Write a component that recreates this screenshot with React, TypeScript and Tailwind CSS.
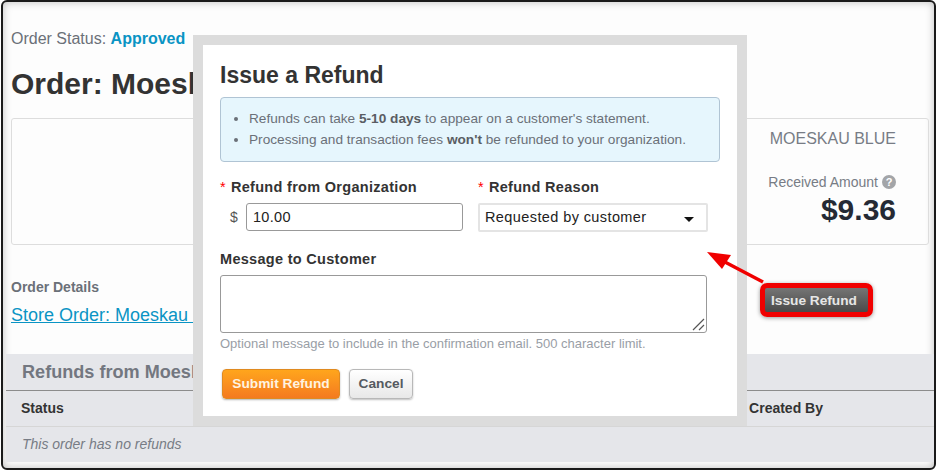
const font = { fontFamily: '"Liberation Sans", Arial, sans-serif' };

function Modal() {
  return (
    <div className="absolute left-[193px] top-[35px] w-[554px] h-[391px] border-[10px] border-[#dcdcdc] bg-white pl-[17px] pr-[17px]">
      <h2 className="mt-[17px] text-[23px] leading-[26px] font-bold text-[#333333]">Issue a Refund</h2>
      <div className="mt-[9px] h-[65px] rounded-[4px] border border-[#b0c4d4] bg-[#e6f6fd] pl-[28px] pt-[10px] text-[13.65px] leading-[21px] text-[#6b7078]">
        <ul className="list-disc pl-0">
          <li>Refunds can take <b className="text-[#5a5d63]">5-10 days</b> to appear on a customer's statement.</li>
          <li>Processing and transaction fees <b className="text-[#5a5d63]">won't</b> be refunded to your organization.</li>
        </ul>
      </div>
      <div className="mt-[15px] flex">
        <div className="w-[258px]">
          <div className="text-[14.5px] leading-[20px] font-bold tracking-[0.3px] text-[#333333]"><span className="text-[#f00] font-normal mr-[5px]">*</span>Refund from Organization</div>
          <div className="mt-[6px] flex items-center pl-[10px]">
            <span className="w-[16px] text-[14px] text-[#555]">$</span>
            <div className="h-[28px] w-[217px] rounded-[3px] border border-[#999] pl-[6px] text-[14.5px] leading-[26px] tracking-[0.3px] text-[#222]">10.00</div>
          </div>
        </div>
        <div className="w-[230px]">
          <div className="text-[14.5px] leading-[20px] font-bold tracking-[0.3px] text-[#333333]"><span className="text-[#f00] font-normal mr-[5px]">*</span>Refund Reason</div>
          <div className="mt-[6px] flex h-[29px] items-center justify-between rounded-[2px] border-2 border-[#e4e4e4] pl-[5px] pr-[12px] pt-[1px] text-[14.5px] tracking-[0.4px] text-[#222]">
            <span>Requested by customer</span>
            <svg width="10" height="5" viewBox="0 0 10 5" className="mt-[3px]"><path d="M0 0h10L5 5z" fill="#111" /></svg>
          </div>
        </div>
      </div>
      <div className="mt-[17px] text-[14.5px] leading-[20px] font-bold tracking-[0.3px] text-[#333333]">Message to Customer</div>
      <div className="relative mt-[6px] h-[58px] w-[487px] rounded-[3px] border border-[#999]">
        <svg width="13" height="13" viewBox="0 0 13 13" className="absolute bottom-[1px] right-[1px]"><path d="M1 12 12 1M7 12l5-5" stroke="#555" strokeWidth="1.2" /></svg>
      </div>
      <p className="mt-[3px] text-[13px] leading-[16px] text-[#999ea6]">Optional message to include in the confirmation email. 500 character limit.</p>
      <div className="mt-[17px] ml-[2px] flex gap-[9px]">
        <div className="flex h-[30px] w-[118px] items-center justify-center rounded-[4px] border border-[#e08a20] bg-gradient-to-b from-[#ffa51c] to-[#f47a20] pt-[1px] text-[13.7px] font-bold text-[#fff3e0] shadow-[0_1px_2px_rgba(0,0,0,0.3)]">Submit Refund</div>
        <div className="flex h-[30px] w-[64px] items-center justify-center rounded-[4px] border border-[#b8b8b8] bg-gradient-to-b from-[#ffffff] to-[#e8e8e8] pt-[1px] text-[13.7px] font-bold text-[#555a60] shadow-[0_1px_2px_rgba(0,0,0,0.25)]">Cancel</div>
      </div>
    </div>
  );
}

export default function App() {
  return (
    <div style={font} className="relative h-[471px] w-[937px] overflow-hidden bg-white">
      <div className="ml-[1px] flex h-[470px] w-[935px] flex-col overflow-hidden rounded-[6px] border-2 border-[#1a1a1a] bg-[#fdfdfd] shadow-[inset_0_0_8px_rgba(0,0,0,0.25)]">
        <div className="px-[8px] pt-[28px]">
          <div className="text-[16px] leading-[18px] text-[#6b7078]">Order Status: <b className="text-[#0a94c4]">Approved</b></div>
          <h1 className="mt-[17px] text-[30px] leading-[38px] font-bold text-[#333333]">Order: Moeskau</h1>
          <div className="mt-[15px] flex h-[127px] w-[918px] justify-end rounded-[3px] border border-[#dddddd] pr-[32px]">
            <div className="flex flex-col items-end">
              <div className="mt-[10px] text-[16px] leading-[20px] text-[#777c85]">MOESKAU BLUE</div>
              <div className="mt-[23px] flex items-center gap-[4px] text-[14px] leading-[20px] text-[#777c85]">
                Received Amount
                <span className="flex h-[14px] w-[14px] items-center justify-center rounded-full bg-[#a3a5a8] text-[11px] leading-none font-bold text-white">?</span>
              </div>
              <div className="mt-[1px] text-[30px] leading-[33px] font-bold text-[#252a34]">$9.36</div>
            </div>
          </div>
          <div className="mt-[34px] text-[14px] leading-[16px] font-bold text-[#6b7078]">Order Details</div>
          <a className="mt-[9px] block text-[18px] leading-[22px] text-[#0a94c4] underline">Store Order: Moeskau Blue</a>
        </div>
        <div className="mt-[28px] ml-[3px] h-[108px] bg-[#e5e6ea]">
          <div className="h-[37px] border-b border-[#8c8c8c] pl-[16px] text-[18.1px] leading-[36px] font-bold text-[#737780]">Refunds from Moeskau</div>
          <div className="flex h-[36px] items-center justify-between border-b border-[#d6d6d6] pl-[15px] pr-[111px] text-[14px] font-bold text-[#333333]">
            <span>Status</span>
            <span>Created By</span>
          </div>
          <div className="pl-[16px] pt-[8px] text-[14px] leading-[18px] text-[#777c85] italic">This order has no refunds</div>
        </div>
      </div>

      <div className="absolute left-[760px] top-[283px] flex h-[34px] w-[113px] items-center justify-center rounded-[7px] border-[5px] border-[#f00000] bg-gradient-to-b from-[#757575] to-[#4a4a4a] pt-[3px] pr-[5px] text-[13.7px] font-bold text-[#e6e6e6] shadow-[0_1px_4px_rgba(0,0,0,0.4)]">Issue Refund</div>
      <Modal />
      <svg className="absolute left-[700px] top-[245px]" width="70" height="42" viewBox="0 0 70 42">
        <path d="M63 37 23 16" stroke="#f00000" strokeWidth="3.5" />
        <path d="M7 7 31 10 22 24z" fill="#f00000" />
      </svg>
    </div>
  );
}
